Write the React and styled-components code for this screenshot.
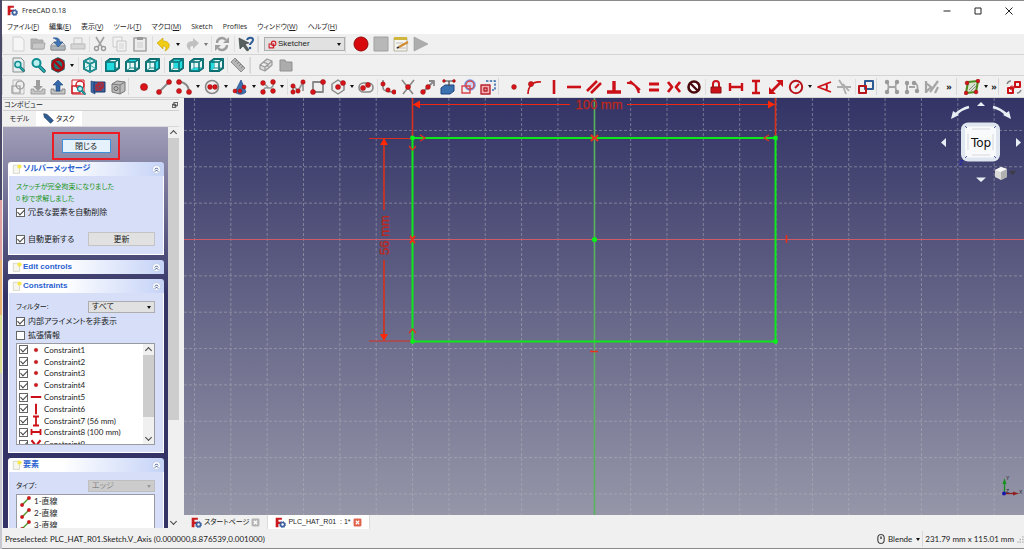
import React from 'react'
import styled, { createGlobalStyle } from 'styled-components'

const GlobalStyle = createGlobalStyle`
    * {
        box-sizing: border-box;
    }
    body {
        margin: 0;
        background: #f0f0f0;
        color: #1c1c1c;
        font: 7px/12px 'Open Sans', 'Noto Sans CJK JP', sans-serif;
        font-feature-settings: 'palt';
    }
    button, select, input {
        margin: 0;
        padding: 0;
        font: inherit;
        color: inherit;
        font-feature-settings: inherit;
    }
    svg {
        display: block;
        flex: none;
    }
`

const Screen = styled.div`
    display: flex;
    height: 100vh;
    overflow: hidden;
`

const Behind = styled.div`
    flex: none;
    width: 2px;
    background: linear-gradient(
        #4a4a68 0 200px,
        #e0a0a0 200px 260px,
        #e8b070 260px 315px,
        #dcdc90 315px 373px,
        #c8c8d0 373px
    );
`

const Window = styled.div`
    flex: 1;
    min-width: 0;
    display: flex;
    flex-direction: column;
    border: 1px solid #8a8a8a;
    border-width: 1px 0;
`

const TitleBar = styled.header`
    flex: none;
    display: flex;
    align-items: center;
    height: 19px;
    padding-left: 5px;
    background: #fff;
`

const Title = styled.h1`
    flex: 1;
    margin: 0 4px;
    font-size: 7px;
    font-weight: 400;
`

const WindowButton = styled.button`
    width: 31px;
    height: 18px;
    border: 0;
    background: none;
    display: grid;
    place-items: center;
`

const MenuBar = styled.nav`
    flex: none;
    display: flex;
    gap: 10px;
    height: 14px;
    padding-left: 5px;
    background: #fff;
    line-height: 14px;
`

const MenuLink = styled.a`
    color: inherit;
    text-decoration: none;
    white-space: nowrap;
`

const Toolbar = styled.div`
    flex: none;
    display: flex;
    align-items: center;
    height: ${props => props.$height || '21px'};
    border-bottom: 1px solid #d4d4d4;
    overflow: hidden;
`

const Tool = styled.button`
    flex: none;
    display: grid;
    place-items: center;
    width: 20px;
    height: 20px;
    border: 0;
    background: none;
`

const Handle = styled.span`
    flex: none;
    width: 6px;
    height: 17px;
    border-left: 1px solid #d8d8d8;
    background: radial-gradient(circle, #b8b8b8 40%, transparent 50%) 2px 0 / 2px 2px repeat-y;
`

const Separator = styled.span`
    flex: none;
    width: ${props => (props.$wide ? '4px' : '2px')};
    height: 16px;
    background: linear-gradient(#dedede, #dedede) center / 1px 100% no-repeat;
`

const Drop = styled.button`
    flex: none;
    width: 8px;
    height: 16px;
    border: 0;
    background: none;
    display: grid;
    place-items: center;

    &::after {
        content: '';
        border: 2px solid transparent;
        border-top: 3px solid ${props => (props.$dim ? '#777' : '#111')};
        border-bottom: 0;
    }
`

const More = styled.button`
    flex: none;
    width: ${props => (props.$narrow ? '8px' : '14px')};
    border: 0;
    background: none;
    font-size: 9px;
    font-weight: 700;
`

const SelectBox = styled.label`
    position: relative;
    display: flex;
    align-items: center;
    gap: 1px;
    width: ${props => props.$width};
    height: ${props => props.$height || '12px'};
    padding-left: 3px;
    border: 1px solid ${props => (props.$disabled ? '#bfbfbf' : '#adadad')};
    background: ${props => (props.$disabled ? '#ccc' : '#e1e1e1')};
    color: ${props => (props.$disabled ? '#888' : '#1c1c1c')};

    select {
        appearance: none;
        flex: 1;
        min-width: 0;
        border: 0;
        background: none;
        font-family: 'Liberation Sans', 'Noto Sans CJK JP', sans-serif;
        font-size: 8px;
        line-height: 10px;
        opacity: 1;
    }
    &::after {
        content: '';
        margin-right: 3px;
        border: 2px solid transparent;
        border-top: 3px solid ${props => (props.$disabled ? '#999' : '#111')};
        border-bottom: 0;
    }
`

const Main = styled.main`
    flex: 1;
    min-height: 0;
    display: flex;
`

const Dock = styled.aside`
    flex: none;
    display: flex;
    flex-direction: column;
    width: 182px;
    padding: 1px 5px 2px 1px;
`

const DockTitle = styled.div`
    flex: none;
    display: flex;
    align-items: center;
    justify-content: space-between;
    height: 12px;
    padding: 0 1px;
    border: 1px solid #d0d0d0;
    border-width: 1px 0;
`

const DockTabs = styled.div`
    flex: none;
    display: flex;
    height: 15px;
`

const DockTab = styled.button`
    display: flex;
    align-items: center;
    justify-content: center;
    gap: 2px;
    width: ${props => (props.$active ? '46px' : '33px')};
    border: 0;
    background: ${props => (props.$active ? '#fff' : '#f0f0f0')};
`

const TaskArea = styled.div`
    flex: 1;
    min-height: 0;
    display: flex;
    border-top: 1px solid #d8d8d8;
`

const TaskList = styled.div`
    flex: 1;
    min-width: 0;
    display: flex;
    flex-direction: column;
    padding: 5px 4px 0 5px;
    background: linear-gradient(#a09eb8, #333366 170px);
    overflow: hidden;
`

const Highlight = styled.div`
    flex: none;
    align-self: center;
    display: grid;
    place-items: center;
    width: 68px;
    height: 28px;
    margin-bottom: 2px;
    border: 2px solid #ed1c24;
`

const PushButton = styled.button`
    width: ${props => (props.$primary ? '49px' : '67px')};
    height: 14px;
    font-size: 8px;
    line-height: 10px;
    border: 1px solid ${props => (props.$primary ? '#3c8fd8' : '#c4c4c4')};
    background: ${props => (props.$primary ? '#e5f1fb' : '#e1e1e1')};
`

const Group = styled.section`
    flex: none;
    margin-bottom: 5px;
`

const GroupHead = styled.h2`
    display: flex;
    align-items: center;
    gap: 1px;
    height: 14px;
    margin: 0;
    padding: 0 3px 0 4px;
    border-radius: 3px 3px 0 0;
    background: linear-gradient(90deg, #fff 35%, #c5d3f7);
    color: #2a5fd0;
    font: 700 8px/12px 'Liberation Sans', 'Noto Sans CJK JP', sans-serif;
    font-feature-settings: 'palt';

    span {
        flex: 1;
    }
`

const GroupBody = styled.div`
    display: flex;
    flex-direction: column;
    height: ${props => props.$height};
    padding: 5px 8px 0 7px;
    border: 1px solid #fff;
    border-top: 0;
    background: #d6dff7;
`

const Message = styled.p`
    margin: 0;
    color: #1d961d;
`

const FormRow = styled.div`
    display: flex;
    align-items: center;
    justify-content: space-between;
    height: 14px;
    margin-top: ${props => props.$top || '0'};
`

const Check = styled.label`
    display: flex;
    align-items: center;
    gap: 3px;
    height: 14px;
    font-size: 8px;
    white-space: nowrap;
`

const Box = styled.input.attrs({ type: 'checkbox' })`
    appearance: none;
    flex: none;
    display: grid;
    place-items: center;
    width: 9px;
    height: 9px;
    border: 1px solid #666;
    background: #fff;

    &:checked::after {
        content: '';
        width: 3px;
        height: 6px;
        border: solid #444;
        border-width: 0 1px 1px 0;
        transform: translateY(-1px) rotate(45deg);
    }
`

const ListBox = styled.div`
    flex: none;
    display: flex;
    height: ${props => props.$height};
    margin-top: ${props => props.$top || '0'};
    border: 1px solid #9a9aa4;
    background: #fff;
    overflow: hidden;
`

const Items = styled.ul`
    flex: 1;
    display: grid;
    grid-auto-rows: 1fr;
    height: ${props => props.$height};
    margin: 0;
    padding: 0 2px;
    list-style: none;
`

const Item = styled.li`
    display: flex;
    align-items: center;
    min-height: 0;
    font-family: Lato, 'Noto Sans CJK JP', sans-serif;
    font-size: 8px;
`

const ItemLabel = styled.label`
    display: flex;
    align-items: center;
    gap: 2px;
    white-space: nowrap;
`

const Edge = styled(Item)`
    gap: 3px;
    padding-left: 1px;
`

const ScrollBar = styled.div`
    flex: none;
    display: flex;
    flex-direction: column;
    align-items: center;
    justify-content: space-between;
    width: 11px;
    background: #f0f0f0;

    &::before,
    &::after {
        content: '';
        width: 4px;
        height: 4px;
        margin: 4px 0 2px;
        border: solid #444;
        border-width: 1px 0 0 1px;
        transform: rotate(45deg);
    }
    &::after {
        margin: 2px 0 4px;
        transform: rotate(225deg);
    }
`

const Thumb = styled.span`
    width: 100%;
    height: ${props => props.$height};
    margin-bottom: auto;
    background: #cdcdcd;
`

const Workspace = styled.div`
    flex: 1;
    min-width: 0;
    display: flex;
    flex-direction: column;
`

const Viewport = styled.div`
    position: relative;
    flex: 1;
    min-height: 0;
    background: linear-gradient(#333366, #9696a9);
    overflow: hidden;
`

const NavCube = styled.div`
    position: absolute;
    top: 0;
    right: 0;
`

const AxisCross = styled.div`
    position: absolute;
    right: 0;
    bottom: 12px;
`

const DocTabs = styled.div`
    flex: none;
    display: flex;
    height: 15px;
`

const DocTab = styled.button`
    display: flex;
    align-items: center;
    gap: 2px;
    height: 14px;
    padding: 0 7px;
    border: 0;
    border-right: 1px solid #ddd;
    background: ${props => (props.$active ? '#fff' : '#f0f0f0')};
    font: 7px/12px 'Liberation Sans', 'Noto Sans CJK JP', sans-serif;
    font-feature-settings: 'palt';
    white-space: pre;
`

const StatusBar = styled.footer`
    flex: none;
    display: flex;
    align-items: center;
    height: 18px;
    padding-left: 3px;
    font-family: Lato, sans-serif;
    font-size: 8px;

    > span:first-child {
        flex: 1;
    }
`

const NavStyle = styled.button`
    display: flex;
    align-items: center;
    gap: 2px;
    border: 0;
    border-right: 1px solid #d8d8d8;
    background: none;
`

const Size = styled.span`
    padding: 0 3px 0 2px;
`

const Icon = ({ size = 16, children }) => (
    <svg width={size} height={size} viewBox="0 0 16 16" fill="none">
        {children}
    </svg>
)

const Dots = ({ at, r = 2.2 }) =>
    at.map(([x, y]) => (
        <circle key={`${x}-${y}`} cx={x} cy={y} r={r} fill="#d8141a" stroke="#8c1010" strokeWidth=".5" />
    ))

const P = ({ d, c = '#cc1018', w = 2, fill = 'none' }) => (
    <path d={d} stroke={c} strokeWidth={w} fill={fill} strokeLinejoin="round" />
)

const FreeCadLogo = ({ size = 12 }) => (
    <Icon size={size}>
        <path d="M1 1h9v3H5v3h4v3H5v5H1z" fill="#cb1a1f" />
        <circle cx="11" cy="11" r="3" stroke="#3d62a0" strokeWidth="2.4" />
        <circle cx="11" cy="11" r="4.6" stroke="#3d62a0" strokeWidth="1.2" strokeDasharray="1.8 1.8" />
    </Icon>
)

const faces = {
    front: 'M2 5h9v9H2z',
    top: 'M2 5l4-3h9l-4 3z',
    right: 'M11 5l4-3v9l-4 3z',
    rear: 'M6 2h9v9H6z',
    bottom: 'M2 14l4-3h9l-4 3z',
    left: 'M2 5l4-3v9l-4 3z',
}

const cubeEdges = 'M2 5h9v9H2zM2 5l4-3h9l-4 3M15 2v9l-4 3'

const Cube = ({ face }) => (
    <>
        <P d="M2 5l4-3h9v9l-4 3H2z" c="#0b5356" w={1.8} fill="#e4f8f8" />
        <P d="M6 2v9h9M6 11l-4 3" c="#0f7f82" w={0.9} />
        <path d={faces[face]} fill="#22dce0" />
        <P d={cubeEdges} c="#0b5f62" w={1.5} />
        <P d={cubeEdges} c="#12a4a8" w={0.5} />
    </>
)

const Forbidden = ({ ring, bg = '#fff' }) => (
    <>
        <circle cx="8" cy="8" r="5.5" fill={bg} stroke={ring} strokeWidth="2.6" />
        <P d="M4 4l8 8" c={ring} w={2.4} />
    </>
)

const Sheet = ({ c = '#bbb', fill = '#eee' }) => <P d="M3 1h8l3 3v11H3z" c={c} w={1} fill={fill} />

const Magnifier = () => (
    <>
        <path d="M9 9l5 5" stroke="#0b5356" strokeWidth="3.4" strokeLinecap="round" />
        <path d="M9 9l5 5" stroke="#23b5b9" strokeWidth="1.8" strokeLinecap="round" />
        <circle cx="6.5" cy="6" r="4" fill="#b8eeee" stroke="#0d8d90" strokeWidth="2" />
    </>
)

const SketchMark = ({ c = '#d0202a', w = 1.6 }) => (
    <>
        <path d="M2 7h8v7H2z" stroke={c} strokeWidth={w} />
        <circle cx="10" cy="6" r="4" stroke={c} strokeWidth={w} />
    </>
)

const icons = {
    new: <Sheet c="#d0d0d0" fill="#f6f6f6" />,
    open: (
        <>
            <P d="M1 3h6l1 1h5v9H1z" c="#a8a8a8" w={1} fill="#b4b4b4" />
            <P d="M3 7h12l-1 6H2z" c="#a8a8a8" w={1} fill="#c8c8c8" />
        </>
    ),
    save: (
        <>
            <P d="M1 9l3-3h8l3 3v5H1z" c="#8d9398" w={1} fill="#cfd3d7" />
            <P d="M1 10h14v4H1z" c="#8d9398" w={1} fill="#b0b5ba" />
            <path d="M3 2c5-1 7 1 7 4h3l-5 5-4-5h3c0-2-1-3-4-4z" fill="#3c74b4" stroke="#204a87" strokeWidth=".5" />
        </>
    ),
    print: (
        <>
            <P d="M4 2h8v6H4z" c="#c4c4c4" w={1} fill="#eee" />
            <P d="M1 8h14v5H1z" c="#bbb" w={1} fill="#d6d6d6" />
        </>
    ),
    cut: (
        <>
            <P d="M4 1l6 10M12 1L6 11" c="#a2a2a2" w={1.6} />
            <circle cx="4.5" cy="12.5" r="2" stroke="#9a9a9a" strokeWidth="1.4" />
            <circle cx="11.5" cy="12.5" r="2" stroke="#9a9a9a" strokeWidth="1.4" />
        </>
    ),
    copy: (
        <>
            <P d="M1 1h9v10H1z" c="#ccc" w={1} fill="#f2f2f2" />
            <P d="M5 5h9v10H5z" c="#c4c4c4" w={1} fill="#f2f2f2" />
            <P d="M7 8h5M7 10h5M7 12h5" c="#ccc" w={0.8} />
        </>
    ),
    paste: (
        <>
            <P d="M2 2h12v13H2z" c="#a5a5a5" w={1.6} fill="#ececec" />
            <path d="M5 1h6v3H5z" fill="#999" />
            <P d="M5 7h6M5 9h6M5 11h6" c="#c8c8c8" w={0.8} />
        </>
    ),
    undo: <path d="M1 7l6-5v3c5 0 7 3 6 6-1 2-2 3-4 4 2-4 0-5-2-5v3z" fill="#f0cc14" stroke="#c4a000" strokeWidth=".6" />,
    redo: <path d="M15 7L9 2v3C4 5 2 8 3 11c1 2 2 3 4 4-2-4 0-5 2-5v3z" fill="#c0c0c0" />,
    refresh: (
        <>
            <P d="M3 7a5 5 0 019-3M13 9a5 5 0 01-9 3" c="#9e9e9e" w={2.4} />
            <path d="M15 1v6H9zM1 15V9h6z" fill="#9e9e9e" />
        </>
    ),
    whats: (
        <>
            <path d="M1 2l10 5-4 1 4 6-2 1-4-5-3 3z" fill="#596060" stroke="#303838" strokeWidth=".6" />
            <P d="M9 4c1-3 6-3 6 0 0 2-3 3-3 5" c="#2d5b94" w={2} />
            <circle cx="12" cy="12" r="1.3" fill="#2d5b94" />
        </>
    ),
    record: <circle cx="8" cy="8" r="7" fill="#d8090d" stroke="#8f0a0a" />,
    stop: <P d="M1 1h14v14H1z" c="#a0a0a0" w={1} fill="#b8b8b8" />,
    macro: (
        <>
            <P d="M1 2h13v13H1z" c="#b5b5a5" w={1} fill="#f5f5ee" />
            <path d="M1 1h13v3H1z" fill="#cfb63c" />
            <P d="M3 7h7M3 12h10" c="#bbb" w={1} />
            <P d="M6 11l9-5" c="#d18a30" w={2.2} />
            <P d="M4 12l2-1" c="#333" w={1.4} />
        </>
    ),
    play: <path d="M1 1l14 7-14 7z" fill="#adadad" stroke="#999" strokeWidth=".6" />,
    fitAll: (
        <>
            <Sheet c="#8a9090" fill="#e8eeee" />
            <svg x="3" y="3" width="12" height="12" viewBox="0 0 16 16">
                <Magnifier />
            </svg>
        </>
    ),
    fitSel: <Magnifier />,
    drawStyle: (
        <>
            <P d="M2 4l6-3 6 3v8l-6 3-6-3z" c="#0d7478" w={1.4} fill="#27b7bb" />
            <Forbidden ring="#a80c12" bg="#22777a" />
        </>
    ),
    iso: (
        <>
            <P d="M2 4l6-3 6 3v8l-6 3-6-3z" c="#0b5356" w={1.8} fill="#dcf6f6" />
            <P d="M8 1v6M2 12l6-4 6 4" c="#0f9a9e" w={0.8} />
            <P d="M2 4l6 3 6-3M8 7v8" c="#0b5f62" w={1.8} />
            <P d="M2 4l6-3 6 3v8l-6 3-6-3zM2 4l6 3 6-3M8 7v8" c="#20c0c4" w={0.7} />
        </>
    ),
    front: <Cube face="front" />,
    top: <Cube face="top" />,
    right: <Cube face="right" />,
    rear: <Cube face="rear" />,
    bottom: <Cube face="bottom" />,
    left: <Cube face="left" />,
    measure: (
        <>
            <P d="M5 1l10 10-4 4L1 5z" c="#8f8f8f" w={1} fill="#b5b5b5" />
            <P d="M7 3L5 5M9 5L7 7M11 7L9 9M13 9l-2 2" c="#777" w={0.8} />
        </>
    ),
    part: <P d="M2 8l7-6 5 2v4l-7 6-5-2zM2 8l5 2 7-6M7 10v4M5 5l5 2v3" c="#9a9a9a" w={1.2} fill="#dcdcdc" />,
    group: <P d="M2 3h5l1 2h6v9H2z" c="#909090" w={1} fill="#acacac" />,
    sketch: (
        <>
            <Sheet />
            <SketchMark c="#999" w={1.2} />
        </>
    ),
    import: (
        <>
            <P d="M1 10h3v2h8v-2h3v5H1z" c="#959595" w={0.8} fill="#c5c5c5" />
            <path d="M6 1h4v6h3l-5 5-5-5h3z" fill="#9d9d9d" />
        </>
    ),
    leave: (
        <>
            <P d="M1 10h3v2h8v-2h3v5H1z" c="#777" w={0.8} fill="#c5c5c5" />
            <path d="M6 12h4V6h3L8 1 3 6h3z" fill="#3468a8" stroke="#1f4580" strokeWidth=".6" />
        </>
    ),
    viewSketch: (
        <>
            <P d="M2 1h12v14H2z" c="#d0202a" w={1} fill="#fff" />
            <SketchMark w={1.4} />
            <svg x="6" y="6" width="10" height="10" viewBox="0 0 16 16">
                <Magnifier />
            </svg>
        </>
    ),
    section: (
        <>
            <P d="M1 2l4 1v12l-4-2z" c="#1d396c" w={0.6} fill="#3e6ba9" />
            <P d="M4 3h11v10H4z" c="#1d396c" w={1} fill="#3b63a1" />
            <P d="M6 6h5v5H6zM8 4h5v5H8z" c="#b8232c" w={1.4} />
        </>
    ),
    mapSketch: (
        <>
            <P d="M2 5l5-3 8 1v9l-5 3-8-2z" c="#777" w={1} fill="#bcbcbc" />
            <P d="M2 5l8 1v9M10 6l5-3" c="#777" w={1} />
            <circle cx="6" cy="9.5" r="2" stroke="#666" />
        </>
    ),
    point: <Dots at={[[8, 8]]} r={3.6} />,
    line: (
        <>
            <P d="M3 13L13 3" c="#888" w={1.8} />
            <Dots at={[[3, 13], [13, 3]]} r={2.5} />
        </>
    ),
    arc: (
        <>
            <P d="M3 3c6 0 10 4 10 10" c="#888" w={1.8} />
            <Dots at={[[3, 3], [3, 12], [13, 13]]} r={2.5} />
        </>
    ),
    circle: (
        <>
            <circle cx="8" cy="8" r="6.5" stroke="#888" strokeWidth="1.6" fill="#eee" />
            <Dots at={[[6, 8], [11, 8]]} r={2.4} />
        </>
    ),
    conic: (
        <>
            <path d="M9 1l5 12c-3 3-8 3-11 0z" fill="#3b72b0" stroke="#1f4580" strokeWidth=".7" />
            <Dots at={[[3, 12], [12, 8], [8, 12]]} r={2} />
        </>
    ),
    bspline: (
        <>
            <P d="M3 13c2-10 8 2 11-9M3 4l5 4" c="#999" w={1.6} />
            <Dots at={[[3, 4], [3, 13], [13, 3], [13, 12]]} r={2.4} />
        </>
    ),
    polyline: (
        <>
            <P d="M3 13V6l5 6 5-9v9" c="#999" w={1.8} />
            <Dots at={[[3, 7], [3, 13], [8, 12], [13, 3]]} />
        </>
    ),
    rect: (
        <>
            <P d="M3 3h10v10H3z" c="#888" w={1.8} />
            <Dots at={[[3, 13], [13, 3]]} r={2.5} />
        </>
    ),
    polygon: (
        <>
            <P d="M8 1l6 4v6l-6 4-6-4V5z" c="#888" w={1.5} fill="#eee" />
            <Dots at={[[8, 8], [13, 4]]} r={2.5} />
        </>
    ),
    slot: (
        <>
            <rect x="1" y="4" width="14" height="9" rx="4.5" stroke="#888" strokeWidth="1.6" />
            <Dots at={[[5, 9], [10, 6]]} r={2.5} />
        </>
    ),
    fillet: (
        <>
            <P d="M3 1v8q0 4 12 4" c="#888" w={1.6} />
            <Dots at={[[3, 5], [8, 11], [14, 13]]} />
        </>
    ),
    trim: (
        <>
            <P d="M2 1l11 14M14 1L3 15" c="#888" w={1.6} />
            <Dots at={[[8, 8]]} r={2.5} />
        </>
    ),
    extend: (
        <>
            <P d="M3 13L14 2M9 2h5v5" c="#888" w={1.8} />
            <Dots at={[[3, 13], [8, 8]]} r={2.4} />
        </>
    ),
    external: (
        <>
            <P d="M1 9l4-3h9v6l-4 3H1z" c="#1f4580" w={1} fill="#3b72b0" />
            <P d="M4 2h10M9 2v5" c="#444" w={1.2} />
            <Dots at={[[4, 2], [14, 2]]} r={1.4} />
        </>
    ),
    carbon: (
        <>
            <circle cx="10" cy="6" r="5" stroke="#6d96e8" strokeWidth="1.6" fill="#c9d8fa" />
            <SketchMark c="#d8464c" w={1.4} />
        </>
    ),
    construction: (
        <>
            <path d="M6 2h9v9h-3" stroke="#3468a8" strokeWidth="1.6" strokeDasharray="2.4 1.4" />
            <P d="M1 6h9v9H1zM4 9h3v3H4z" c="#b8232c" w={1.4} fill="#f2aeb1" />
        </>
    ),
    cPoint: <Dots at={[[8, 8]]} r={2.4} />,
    pointOn: (
        <>
            <P d="M2 15C2 8 6 2 15 3" w={1.6} />
            <Dots at={[[5, 5]]} r={2.6} />
        </>
    ),
    vertical: <P d="M8 1v14" w={2.6} />,
    horizontal: <P d="M1 8h14" w={2.6} />,
    parallel: <P d="M1 12L11 2M5 14L15 4" w={2.6} />,
    perpendicular: <P d="M1 13h14M8 2v11" w={3.4} />,
    tangent: <P d="M1 4c6-1 10 3 12 10M4 2l10 9" w={2.2} />,
    equal: <P d="M3 5h10M3 11h10" w={3} />,
    symmetric: <P d="M2 3l4 5-4 5M14 3l-4 5 4 5" w={2.8} />,
    block: <Forbidden ring="#4a0b0e" />,
    lock: (
        <>
            <P d="M5 8V5a3 3 0 016 0v3" w={2} />
            <P d="M3 8h10v6H3z" c="#8c1010" w={1} fill="#cc1018" />
        </>
    ),
    hDist: <P d="M2 4v8M14 4v8M2 8h12" w={2.4} />,
    vDist: <P d="M4 2h8M4 14h8M8 2v12" w={2.4} />,
    distance: (
        <>
            <P d="M3 13L13 3" w={2.6} />
            <path d="M15 1v7L8 1zM1 15V8l7 7z" fill="#cc1018" />
        </>
    ),
    radius: (
        <>
            <circle cx="8" cy="8" r="6.2" stroke="#b5141b" strokeWidth="2" />
            <P d="M7 9l4-4" w={2} />
        </>
    ),
    angle: <P d="M15 3L2 8l13 5M10 4q2 4 0 8" w={1.8} />,
    snell: <P d="M1 8h14M3 1l4 6 3 8M7 5l6 7" c="#adadad" w={1.8} />,
    toggle: (
        <>
            <P d="M7 2h8v8H7z" c="#2d5b94" w={2} />
            <P d="M1 7h7v7H1z" c="#b8141b" w={2} />
        </>
    ),
    splineA: (
        <>
            <P d="M3 3q3 5 0 10M13 3q-3 5 0 10M5 8h6" c="#a5a5a5" w={1.8} />
            {[[3, 3], [3, 13], [13, 3], [13, 13]].map(([x, y]) => (
                <circle key={x + y * 20} cx={x} cy={y} r="2.2" fill="#999" />
            ))}
        </>
    ),
    splineB: (
        <>
            <P d="M3 13V4M10 4q5 1 3 8M5 8h6" c="#a5a5a5" w={1.8} />
            {[[3, 4], [3, 13], [10, 4], [13, 12]].map(([x, y]) => (
                <circle key={x + y * 20} cx={x} cy={y} r="2.2" fill="#999" />
            ))}
        </>
    ),
    splineC: <P d="M2 2v12M2 4l5 4-5 5M14 2L6 13M14 8l-3 6" c="#a5a5a5" w={2.2} />,
    space: (
        <>
            <P d="M4 3l10-1-2 11-10 1z" c="#4f8a1c" w={2} fill="#d8e4d0" />
            <P d="M5 11l6-6M7 12l5-5" c="#888" w={1} />
            <Dots at={[[3, 4], [14, 2], [2, 14], [12, 13]]} r={1.9} />
        </>
    ),
    clone: (
        <>
            <P d="M2 9h5v5H2zM9 3h5v5H9z" w={2} />
            <circle cx="6" cy="9" r="2" stroke="#cc1018" />
            <P d="M1 5q1-3 4-3M15 11q-1 3-4 3" c="#888" w={1.4} />
        </>
    ),
}

const menus = [
    ['ファイル', 'F'],
    ['編集', 'E'],
    ['表示', 'V'],
    ['ツール', 'T'],
    ['マクロ', 'M'],
    ['Sketch'],
    ['Profiles'],
    ['ウィンドウ', 'W'],
    ['ヘルプ', 'H'],
]

// "#" handle, "|" separator, "||" wide separator, "v" drop arrow, ">>" overflow
const fileTools = '# new open save print | cut copy paste || undo v redo v- | refresh || whats | #'
const macroTools = '# record stop macro play'
const viewTools =
    '# fitAll fitSel drawStyle v || iso | front top right || rear bottom left | measure | # part group'
const sketchTools =
    '# sketch import leave viewSketch section mapSketch # point line arc v circle v conic v bspline v | polyline rect polygon v slot | fillet trim extend external carbon construction # cPoint pointOn vertical horizontal parallel perpendicular tangent equal symmetric block | lock hDist vDist distance radius v angle snell | toggle # splineA splineB splineC >> # space v > # clone'

const Tools = ({ list }) =>
    list.split(' ').map((name, i) => {
        if (name === '#') return <Handle key={i} />
        if (name === '|' || name === '||') return <Separator key={i} $wide={name === '||'} />
        if (name === 'v' || name === 'v-') {
            return <Drop key={i} $dim={name === 'v-'} aria-label="more options" />
        }
        if (name === '>' || name === '>>') {
            return (
                <More key={i} $narrow={name === '>'}>
                    »
                </More>
            )
        }
        return (
            <Tool key={i} aria-label={name}>
                <Icon>{icons[name]}</Icon>
            </Tool>
        )
    })

const constraints = [
    ['Constraint1', 'cPoint'],
    ['Constraint2', 'cPoint'],
    ['Constraint3', 'cPoint'],
    ['Constraint4', 'cPoint'],
    ['Constraint5', 'horizontal'],
    ['Constraint6', 'vertical'],
    ['Constraint7 (56 mm)', 'vDist'],
    ['Constraint8 (100 mm)', 'hDist'],
    ['Constraint9', 'symmetric'],
]

const TaskGroup = ({ title, height, children }) => (
    <Group>
        <GroupHead>
            <Icon size={10}>
                <P d="M2 2h10v13H2z" c="#c4c4b4" w={1} fill="#f6f6ee" />
                <circle cx="12" cy="4" r="3.4" fill="#f6e84a" />
            </Icon>
            <span>{title}</span>
            <Icon size={9}>
                <circle cx="8" cy="8" r="7" fill="#fff" stroke="#a8b8dc" />
                <P d="M5 8l3-3 3 3M5 12l3-3 3 3" c="#23418c" w={1.6} />
            </Icon>
        </GroupHead>
        {children && <GroupBody $height={height}>{children}</GroupBody>}
    </Group>
)

// grid lines every 10 mm, counted from the sketch origin
const steps = (from, to, origin) => {
    const out = []
    for (let i = from; i <= to; i++) {
        if (i !== 0) out.push(origin + i * 36.35)
    }
    return out
}

const Sketch = () => (
    <svg width="100%" height="100%" viewBox="184 98 840 417" preserveAspectRatio="xMidYMid slice">
        <g stroke="#b4b4bc" strokeWidth="1" strokeDasharray="3 2" opacity=".5">
            {steps(-11, 11, 594.3).map(x => (
                <path key={x} d={`M${x} 98V515`} />
            ))}
            {steps(-3, 7, 239.5).map(y => (
                <path key={y} d={`M184 ${y}H1024`} />
            ))}
        </g>
        <path d="M184 239.5H1024" stroke="#cc5c66" strokeWidth="1.2" />
        <path d="M594.5 98V515" stroke="#58b45c" strokeWidth="1.6" />
        <g stroke="#d8301c" fill="none">
            <path d="M412.5 98v40M775.5 98v40" strokeWidth="1.6" />
            <path d="M413 104.5h157M627 104.5h148" stroke="#f02810" strokeWidth="1.2" />
            <path d="M369 138.5h43M369 341h43" strokeWidth="1.2" />
            <path d="M384 139v71M384 260v80" strokeWidth="1.6" />
        </g>
        <path
            d="M413 104.5l7-4v8zM775 104.5l-7-4v8zM384 138l-4 7h8zM384 341l-4-7h8z"
            fill="#ff2808"
        />
        <path d="M412.5 138H775.5V341.5H412.5z" fill="none" stroke="#0ce81a" strokeWidth="2" />
        <g fill="#0cf01a">
            <circle cx="412.5" cy="138" r="2.4" />
            <circle cx="775.5" cy="138" r="2.4" />
            <circle cx="412.5" cy="341.5" r="2.4" />
            <circle cx="775.5" cy="341.5" r="2.4" />
            <circle cx="594.5" cy="239.5" r="2.6" />
        </g>
        <g stroke="#e8301c" fill="none" strokeWidth="1.2">
            <path d="M420 135l5 3-5 3M409 146l3.5 4 3.5-4M409 333l3.5-4 3.5 4M769 135l-5 3 5 3" />
            <path
                d="M591 135l3 3-3 3M598 135l-3 3 3 3M410 236l2.5 3 2.5-3M410 243l2.5-3 2.5 3"
                strokeWidth="2"
            />
            <path d="M786.5 235v8M590 351.5h8" strokeWidth="1.6" />
        </g>
        <g
            fill="#bc281e"
            stroke="#bc281e"
            strokeWidth=".3"
            fontFamily="Liberation Sans, sans-serif"
            fontSize="13"
            textAnchor="middle"
        >
            <text x="599" y="109">
                100 mm
            </text>
            <text transform="rotate(-90 389 235)" x="389" y="235">
                56 mm
            </text>
        </g>
    </svg>
)

const Cube3d = () => (
    <svg width="90" height="90" viewBox="934 98 90 90">
        <g fill="#e8eef4">
            <path d="M977 106l4-4 4 4zM976 177.5l5 4.5 5-4.5zM946 138v9l-5-4.5zM1016 138v9l5-4.5z" />
            <path d="M951 119l2-8 6 4zM1011 119l-2-8-6 4z" />
        </g>
        <path d="M969 107q-8 2-14 8M993 107q8 2 14 8" stroke="#e8eef4" strokeWidth="2.6" fill="none" />
        <rect x="961" y="122.5" width="39" height="39" rx="7" fill="#dfe6f0" />
        <rect x="965" y="126.5" width="31" height="31" rx="3" fill="#f9fafc" />
        <path d="M972 129h18M972 155h18M968 134v16M993 134v16" stroke="#d4d8de" />
        <path d="M965 126l2 2M996 126l-2 2M965 158l2-2M996 158l-2-2" stroke="#5560a0" />
        <text x="959" y="165" fill="#2020c0" fontSize="7" fontFamily="Liberation Sans, sans-serif">
            Z
        </text>
        <text
            x="981"
            y="147"
            fontSize="12"
            fontFamily="DejaVu Sans, sans-serif"
            textAnchor="middle"
            fill="#111"
        >
            Top
        </text>
        <path d="M995 170l6-3 6 2v8l-6 3-6-3z" fill="#d8d8d8" />
        <path d="M995 170l6-3 6 2-6 3z" fill="#f8f8f8" />
        <path d="M1001 172l6-3v8l-6 3z" fill="#b0b0b0" />
        <path d="M1009 171h7l-3.5 4z" fill="#3c3c44" />
    </svg>
)

const Axes = () => (
    <svg width="26" height="30" viewBox="998 474 26 30" fontFamily="Liberation Sans, sans-serif">
        <path d="M1004.5 494v-10" stroke="#189020" strokeWidth="1.4" />
        <path d="M1002.5 485l2-6 2 6z" fill="#189020" />
        <path d="M1004 494.5h10" stroke="#902020" strokeWidth="1.4" />
        <path d="M1013 492.5l6 2-6 2z" fill="#902020" />
        <circle cx="1004" cy="494.5" r="2" fill="#1818b0" />
        <g fontSize="5" fill="#222">
            <text x="1006" y="481">
                Y
            </text>
            <text x="1019" y="495">
                X
            </text>
            <text x="1006" y="494">
                Z
            </text>
        </g>
    </svg>
)

const CloseMark = ({ active }) => (
    <Icon size={9}>
        <rect x="1" y="1" width="14" height="14" rx="2" fill={active ? '#e0644c' : '#b4b4b4'} />
        <P d="M5 5l6 6M11 5l-6 6" c="#fff" w={2.2} />
    </Icon>
)

const TaskPanel = () => (
    <TaskArea>
        <TaskList>
            <Highlight>
                <PushButton $primary>閉じる</PushButton>
            </Highlight>
            <TaskGroup title="ソルバーメッセージ" height="79px">
                <Message>スケッチが完全拘束になりました</Message>
                <Message>0 秒で求解しました</Message>
                <Check>
                    <Box defaultChecked />
                    冗長な要素を自動削除
                </Check>
                <FormRow $top="13px">
                    <Check>
                        <Box defaultChecked />
                        自動更新する
                    </Check>
                    <PushButton>更新</PushButton>
                </FormRow>
            </TaskGroup>
            <TaskGroup title="Edit controls" />
            <TaskGroup title="Constraints" height="160px">
                <FormRow $top="2px">
                    <label htmlFor="filter">フィルター:</label>
                    <SelectBox $width="67px">
                        <select id="filter">
                            <option>すべて</option>
                        </select>
                    </SelectBox>
                </FormRow>
                <Check>
                    <Box defaultChecked />
                    内部アライメントを非表示
                </Check>
                <Check>
                    <Box />
                    拡張情報
                </Check>
                <ListBox $height="102px" $top="1px">
                    <Items $height="106px">
                        {constraints.map(([name, icon]) => (
                            <Item key={name}>
                                <ItemLabel>
                                    <Box defaultChecked />
                                    <Icon size={12}>{icons[icon]}</Icon>
                                    {name}
                                </ItemLabel>
                            </Item>
                        ))}
                    </Items>
                    <ScrollBar>
                        <Thumb $height="62px" />
                    </ScrollBar>
                </ListBox>
            </TaskGroup>
            <TaskGroup title="要素" height="90px">
                <FormRow $top="2px">
                    <label htmlFor="type">タイプ:</label>
                    <SelectBox $width="67px" $disabled>
                        <select id="type" disabled>
                            <option>エッジ</option>
                        </select>
                    </SelectBox>
                </FormRow>
                <ListBox $height="60px" $top="1px">
                    <Items $height="36px">
                        {['1-直線', '2-直線', '3-直線'].map(name => (
                            <Edge key={name}>
                                <Icon size={11}>
                                    <P d="M3 13L13 3" c="#4f9a2c" w={2} />
                                    <Dots at={[[3, 13], [13, 3]]} r={2.5} />
                                </Icon>
                                {name}
                            </Edge>
                        ))}
                    </Items>
                </ListBox>
            </TaskGroup>
        </TaskList>
        <ScrollBar>
            <Thumb $height="282px" />
        </ScrollBar>
    </TaskArea>
)

const App = () => (
    <Screen>
        <GlobalStyle />
        <Behind />
        <Window>
            <TitleBar>
                <FreeCadLogo size={11} />
                <Title>FreeCAD 0.18</Title>
                <WindowButton aria-label="minimize">
                    <Icon size={8}>
                        <P d="M1 8h14" c="#222" w={2} />
                    </Icon>
                </WindowButton>
                <WindowButton aria-label="maximize">
                    <Icon size={8}>
                        <P d="M2 2h12v12H2z" c="#222" w={2} />
                    </Icon>
                </WindowButton>
                <WindowButton aria-label="close">
                    <Icon size={8}>
                        <P d="M1 1l14 14M15 1L1 15" c="#222" w={2} />
                    </Icon>
                </WindowButton>
            </TitleBar>
            <MenuBar>
                {menus.map(([label, key]) => (
                    <MenuLink href="#" key={label}>
                        {label}
                        {key && (
                            <>
                                (<u>{key}</u>)
                            </>
                        )}
                    </MenuLink>
                ))}
            </MenuBar>
            <Toolbar>
                <Tools list={fileTools} />
                <SelectBox $width="81px" $height="14px">
                    <Icon size={9}>
                        <SketchMark w={2} />
                    </Icon>
                    <select aria-label="workbench">
                        <option>Sketcher</option>
                    </select>
                </SelectBox>
                <Tools list={macroTools} />
            </Toolbar>
            <Toolbar>
                <Tools list={viewTools} />
            </Toolbar>
            <Toolbar $height="22px">
                <Tools list={sketchTools} />
            </Toolbar>
            <Main>
                <Dock>
                    <DockTitle>
                        コンボビュー
                        <Icon size={6}>
                            <P d="M5 1h10v9H5zM1 6h9v9H1z" c="#222" w={2} fill="#f0f0f0" />
                        </Icon>
                    </DockTitle>
                    <DockTabs>
                        <DockTab>モデル</DockTab>
                        <DockTab $active>
                            <Icon size={11}>
                                <path d="M1 1l5 1 9 9-4 4L2 6z" fill="#2f5d92" stroke="#1c3c66" />
                            </Icon>
                            タスク
                        </DockTab>
                    </DockTabs>
                    <TaskPanel />
                </Dock>
                <Workspace>
                    <Viewport>
                        <Sketch />
                        <NavCube>
                            <Cube3d />
                        </NavCube>
                        <AxisCross>
                            <Axes />
                        </AxisCross>
                    </Viewport>
                    <DocTabs>
                        <DocTab>
                            <FreeCadLogo size={11} />
                            スタートページ
                            <CloseMark />
                        </DocTab>
                        <DocTab $active>
                            <FreeCadLogo size={11} />
                            {'PLC_HAT_R01  : 1*'}
                            <CloseMark active />
                        </DocTab>
                    </DocTabs>
                </Workspace>
            </Main>
            <StatusBar>
                <span>Preselected: PLC_HAT_R01.Sketch.V_Axis (0.000000,8.876539,0.001000)</span>
                <NavStyle>
                    <Icon size={10}>
                        <rect x="3" y="1" width="10" height="14" rx="4" stroke="#222" strokeWidth="1.6" />
                        <P d="M8 4v4" c="#222" w={2} />
                    </Icon>
                    Blende
                    <Drop as="span" />
                </NavStyle>
                <Size>231.79 mm x 115.01 mm</Size>
                <Icon size={7}>
                    <P d="M12 2h3M6 8h3M12 8h3M1 14h3M6 14h3M12 14h3" c="#aaa" w={3} />
                </Icon>
            </StatusBar>
        </Window>
    </Screen>
)

export default App
